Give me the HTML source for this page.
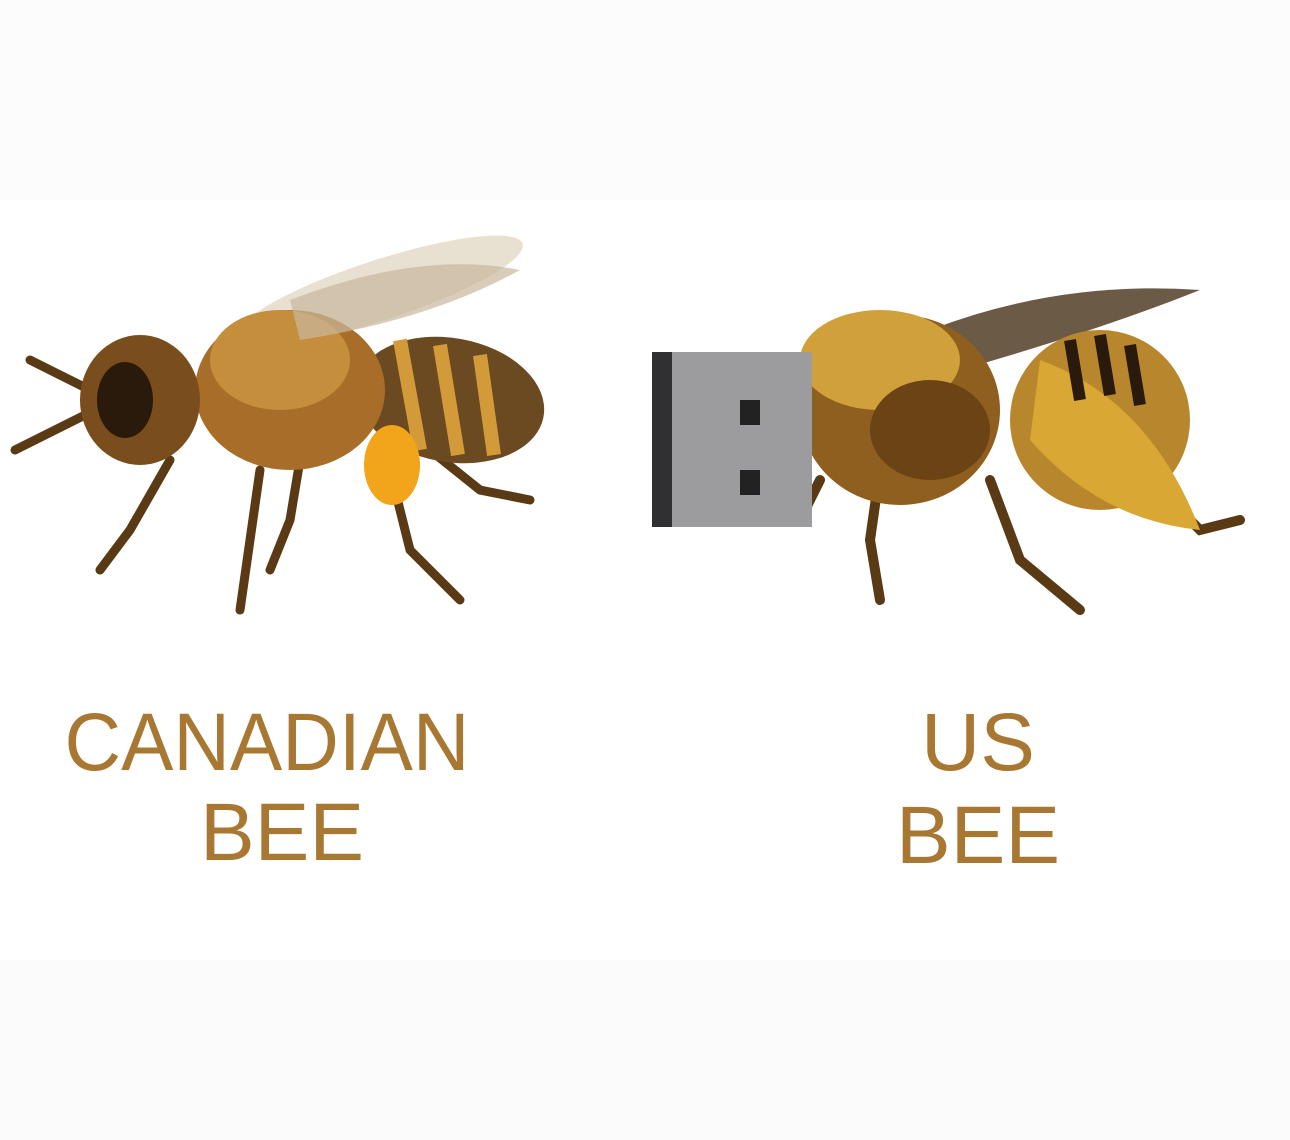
<!DOCTYPE html>
<html><head><style>
html,body{margin:0;padding:0;background:#fff;}
svg{display:block}
</style></head><body>
<svg width="1290" height="1140" viewBox="0 0 1290 1140" xmlns="http://www.w3.org/2000/svg">
<rect width="1290" height="1140" fill="#ffffff"/>
<rect y="0" width="1290" height="200" fill="#fcfcfc"/>
<rect y="960" width="1290" height="180" fill="#fbfbfb"/>

<!-- Canadian bee -->
<g>
 <ellipse cx="380" cy="290" rx="150" ry="30" fill="#d9cbb3" opacity="0.6" transform="rotate(-18 380 290)"/>
 <g stroke="#5a3a14" stroke-width="9" fill="none" stroke-linecap="round">
  <path d="M170 460 L130 530 L100 570"/>
  <path d="M260 470 L250 540 L240 610"/>
  <path d="M300 460 L290 520 L270 570"/>
  <path d="M390 470 L410 550 L460 600"/>
  <path d="M430 450 L480 490 L530 500"/>
  <path d="M90 390 L30 360"/>
  <path d="M95 410 L15 450"/>
 </g>
 <ellipse cx="450" cy="400" rx="95" ry="62" fill="#6b4a22" transform="rotate(10 450 400)"/>
 <path d="M400 340 l20 110 M440 345 l18 110 M480 355 l14 100" stroke="#d39a3a" stroke-width="14"/>
 <ellipse cx="290" cy="390" rx="95" ry="80" fill="#a86d28"/>
 <ellipse cx="280" cy="360" rx="70" ry="50" fill="#c58e3c"/>
 <ellipse cx="140" cy="400" rx="60" ry="65" fill="#7a4e1c"/>
 <ellipse cx="125" cy="400" rx="28" ry="38" fill="#2a1a0c"/>
 <ellipse cx="392" cy="465" rx="28" ry="40" fill="#f2a51a"/>
 <path d="M290 300 Q420 250 520 270 Q430 320 300 340 Z" fill="#c9b89c" opacity="0.7"/>
</g>

<!-- USB bee -->
<g>
 <g stroke="#5a3a14" stroke-width="10" fill="none" stroke-linecap="round">
  <path d="M820 480 L800 520"/>
  <path d="M880 470 L870 540 L880 600"/>
  <path d="M990 480 L1020 560 L1080 610"/>
  <path d="M1150 480 L1200 530 L1240 520"/>
 </g>
 <path d="M930 330 Q1060 280 1200 290 Q1100 330 960 370 Z" fill="#6b5a45"/>
 <ellipse cx="1100" cy="420" rx="90" ry="90" fill="#b8862c"/>
 <path d="M1040 360 Q1150 400 1200 530 Q1100 520 1030 440 Z" fill="#d9a733"/>
 <path d="M1070 340 l10 60 M1100 335 l10 60 M1130 345 l10 60" stroke="#2a1a0c" stroke-width="12"/>
 <ellipse cx="900" cy="410" rx="100" ry="95" fill="#8e5f1e"/>
 <ellipse cx="880" cy="360" rx="80" ry="50" fill="#d0a03a"/>
 <ellipse cx="930" cy="430" rx="60" ry="50" fill="#6b4315"/>
 <rect x="652" y="352" width="160" height="175" rx="4" fill="#8e8e90"/>
 <rect x="652" y="352" width="20" height="175" fill="#303032"/>
 <rect x="672" y="352" width="140" height="175" fill="#9c9c9e"/>
 <rect x="740" y="400" width="20" height="25" fill="#222"/>
 <rect x="740" y="470" width="20" height="25" fill="#222"/>
</g>

<g font-family="Liberation Sans, Arial, sans-serif" font-size="82" fill="#a87833" text-anchor="middle">
 <text x="267" y="770" textLength="405" lengthAdjust="spacingAndGlyphs">CANADIAN</text>
 <text x="282" y="860">BEE</text>
 <text x="978" y="770">US</text>
 <text x="978" y="863">BEE</text>
</g>
</svg>
</body></html>
